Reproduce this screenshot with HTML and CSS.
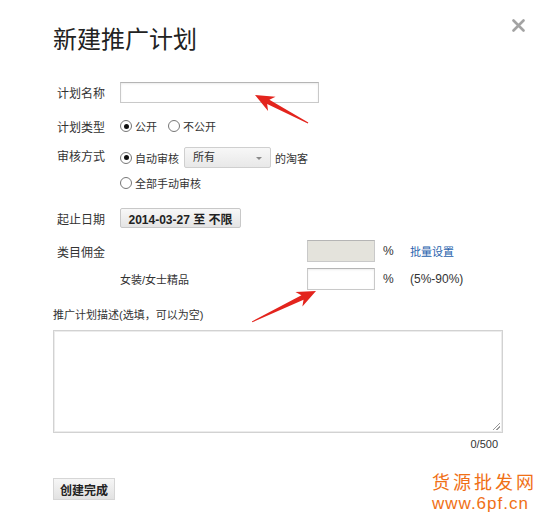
FILE: index.html
```html
<!DOCTYPE html>
<html lang="zh-CN">

<head>
    <meta charset="UTF-8">
    <title>新建推广计划</title>
    <link rel="stylesheet" href="styles.css">
</head>

<body>
    <div class="dialog">
        <span class="close">
            <svg width="13" height="13" viewBox="0 0 13 13">
                <path d="M1.5 1.5 L11.5 11.5 M11.5 1.5 L1.5 11.5" stroke="#a3a3a3" stroke-width="2.6" stroke-linecap="round" />
            </svg>
        </span>

        <h1 class="title">新建推广计划</h1>

        <div class="row row-name">
            <span class="label">计划名称</span>
            <input class="text-input name-input" type="text">
        </div>

        <div class="row row-type">
            <span class="label">计划类型</span>
            <span class="radio"><span class="dot on"></span>公开</span>
            <span class="radio radio-gap"><span class="dot"></span>不公开</span>
        </div>

        <div class="row row-review">
            <span class="label">审核方式</span>
            <div class="options">
                <div class="option-line">
                    <span class="radio"><span class="dot on"></span>自动审核</span>
                    <span class="select">所有<span class="caret"></span></span>
                    <span class="after-select">的淘客</span>
                </div>
                <div class="option-line second">
                    <span class="radio"><span class="dot"></span>全部手动审核</span>
                </div>
            </div>
        </div>

        <div class="row row-date">
            <span class="label">起止日期</span>
            <button class="date-btn" type="button">2014-03-27 至 不限</button>
        </div>

        <div class="commission">
            <span class="label">类目佣金</span>
            <span></span>
            <span class="text-input rate-input disabled"></span>
            <span class="pct">%</span>
            <a class="link">批量设置</a>

            <span></span>
            <span class="cat-name">女装/女士精品</span>
            <span class="text-input rate-input"></span>
            <span class="pct">%</span>
            <span class="range">(5%-90%)</span>
        </div>

        <div class="desc-label">推广计划描述(选填，可以为空)</div>
        <div class="desc-box">
            <span class="grip"></span>
        </div>
        <div class="counter">0/500</div>

        <button class="submit-btn" type="button">创建完成</button>

        <div class="watermark">
            <div class="wm-cn">货源批发网</div>
            <div class="wm-en">www.6pf.cn</div>
        </div>

        <!-- red annotation arrows drawn over the form -->
        <svg class="arrows" width="546" height="525" viewBox="0 0 546 525">
            <g fill="#e3241d">
                <polygon transform="translate(255 95) rotate(207.8)"
                    points="0,0 -19,-8 -15,-2.4 -60,-0.5 -60,0.5 -15,2.4 -19,8" />
                <polygon transform="translate(316 291) rotate(-25.8)"
                    points="0,0 -19,-8 -15,-2.4 -71,-0.5 -71,0.5 -15,2.4 -19,8" />
            </g>
        </svg>
    </div>
</body>

</html>
```

FILE: styles.css
```css
body {
    margin: 0;
    background: #fff;
    color: #333;
    font-family: "Liberation Sans", "Noto Sans CJK SC", sans-serif;
    font-size: 12px;
}

.dialog {
    position: relative;
    width: 546px;
    height: 525px;
    padding: 22px 0 0 53px;
    box-sizing: border-box;
    overflow: hidden;
}

.close {
    position: absolute;
    left: 512px;
    top: 19px;
    width: 13px;
    height: 13px;
}

.title {
    margin: 0;
    font-size: 24px;
    line-height: 32px;
    font-weight: normal;
    color: #222;
    font-family: "Noto Sans CJK SC", sans-serif;
}

.row {
    display: flex;
    align-items: center;
    padding-left: 4px;
}

.label {
    width: 63px;
    flex: none;
}

.text-input {
    box-sizing: border-box;
    height: 21px;
    margin: 0;
    border: 1px solid #c9c9c9;
    border-top-color: #b5b5b5;
    background: #fff;
    box-shadow: inset 0 1px 2px rgba(0, 0, 0, 0.08);
    outline: none;
}

.row-name {
    margin-top: 28px;
    height: 21px;
}

.name-input {
    width: 199px;
    padding: 0;
}

.row-type {
    margin-top: 13px;
    height: 20px;
}

.radio {
    display: inline-flex;
    align-items: center;
    white-space: nowrap;
    font-size: 11px;
}

.radio-gap {
    margin-left: 11px;
}

.dot {
    position: relative;
    width: 12px;
    height: 12px;
    margin-right: 3px;
    border: 1px solid #777;
    border-radius: 50%;
    box-sizing: border-box;
    background: #fff;
}

.dot.on::after {
    content: '';
    position: absolute;
    left: 2.5px;
    top: 2.5px;
    width: 5px;
    height: 5px;
    border-radius: 50%;
    background: #111;
}

.row-review {
    margin-top: 11px;
    align-items: flex-start;
}

.row-review .label {
    line-height: 21px;
}

.option-line {
    display: flex;
    align-items: center;
    height: 21px;
}

.option-line.second {
    margin-top: 5px;
    height: 20px;
}

.select {
    position: relative;
    box-sizing: border-box;
    width: 87px;
    height: 21px;
    margin-left: 5px;
    padding-left: 8px;
    line-height: 19px;
    font-size: 11px;
    border: 1px solid #cfcfcf;
    border-radius: 2px;
    background: linear-gradient(#f7f7f7, #e8e8e8);
}

.caret {
    position: absolute;
    right: 8px;
    top: 9px;
    border-left: 3px solid transparent;
    border-right: 3px solid transparent;
    border-top: 3px solid #8a8a8a;
}

.after-select {
    margin-left: 4px;
    font-size: 11px;
}

.row-date {
    margin-top: 15px;
    height: 20px;
}

.date-btn {
    box-sizing: border-box;
    width: 121px;
    height: 20px;
    padding: 0;
    border: 1px solid #c8c8c8;
    border-radius: 2px;
    background: linear-gradient(#f8f8f8, #e4e4e4);
    color: #222;
    font-family: "Liberation Sans", "Noto Sans CJK SC", sans-serif;
    font-size: 12px;
    font-weight: bold;
}

.commission {
    display: grid;
    grid-template-columns: 63px 187px 68px 35px auto;
    grid-auto-rows: 22px;
    row-gap: 6px;
    align-items: center;
    margin-top: 12px;
    padding-left: 4px;
}

.rate-input {
    height: 22px;
}

.rate-input.disabled {
    background: #e4e3dc;
    box-shadow: none;
}

.cat-name {
    font-size: 11px;
}

.pct {
    padding-left: 8px;
}

.link {
    color: #2862ad;
    font-size: 11px;
    text-decoration: none;
}

.desc-label {
    margin-top: 17px;
    line-height: 16px;
    font-size: 11px;
}

.desc-box {
    position: relative;
    box-sizing: border-box;
    width: 450px;
    height: 103px;
    margin-top: 7px;
    border: 1px solid #d2d2d2;
    box-shadow: inset 0 0 0 1px #ececec;
}

.grip {
    position: absolute;
    right: 2px;
    bottom: 2px;
    width: 7px;
    height: 7px;
    background: linear-gradient(135deg, transparent 45%, #999 45%, #999 55%, transparent 55%, transparent 70%, #999 70%, #999 80%, transparent 80%);
}

.counter {
    width: 450px;
    margin-top: 4px;
    padding-right: 5px;
    box-sizing: border-box;
    text-align: right;
    line-height: 14px;
    font-size: 11px;
}

.submit-btn {
    box-sizing: border-box;
    width: 62px;
    height: 22px;
    margin-top: 27px;
    padding: 0;
    border: 1px solid #d6d6d6;
    background: linear-gradient(#f6f6f6, #e2e2e2);
    color: #222;
    font-family: "Noto Sans CJK SC", sans-serif;
    font-size: 12px;
    font-weight: bold;
}

.watermark {
    position: absolute;
    left: 432px;
    top: 468px;
    color: #f07016;
}

.wm-cn {
    font-family: "Noto Sans CJK SC", sans-serif;
    font-size: 18px;
    line-height: 26px;
    letter-spacing: 3px;
}

.wm-en {
    font-family: "Liberation Sans", sans-serif;
    font-size: 17px;
    line-height: 20px;
    letter-spacing: 1px;
}

.arrows {
    position: absolute;
    left: 0;
    top: 0;
    pointer-events: none;
}
```
